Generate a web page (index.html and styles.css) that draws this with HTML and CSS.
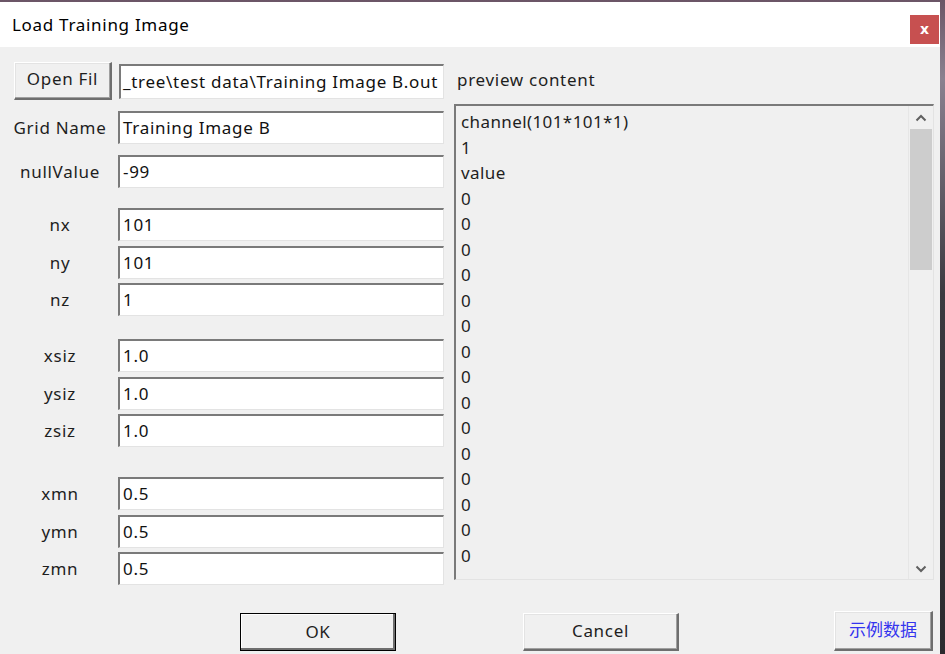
FILE: index.html
```html
<!DOCTYPE html>
<html lang="en">
<head>
<meta charset="utf-8">
<title>Load Training Image</title>
<link rel="stylesheet" href="styles.css">
</head>
<body>
<div class="window">
  <div class="titlebar">
    <span class="title">Load Training Image</span>
    <button class="close" type="button">x</button>
  </div>
  <div class="content">
    <div class="main">
      <div class="left">
        <div class="file-row">
          <button class="btn open" type="button">Open Fil</button>
          <div class="field path">_tree\test data\Training Image B.out</div>
        </div>
        <div class="group g1">
          <div class="row"><span class="label">Grid Name</span><div class="field">Training Image B</div></div>
          <div class="row"><span class="label">nullValue</span><div class="field">-99</div></div>
        </div>
        <div class="group g2">
          <div class="row"><span class="label">nx</span><div class="field">101</div></div>
          <div class="row"><span class="label">ny</span><div class="field">101</div></div>
          <div class="row"><span class="label">nz</span><div class="field">1</div></div>
        </div>
        <div class="group g3">
          <div class="row"><span class="label">xsiz</span><div class="field">1.0</div></div>
          <div class="row"><span class="label">ysiz</span><div class="field">1.0</div></div>
          <div class="row"><span class="label">zsiz</span><div class="field">1.0</div></div>
        </div>
        <div class="group g4">
          <div class="row"><span class="label">xmn</span><div class="field">0.5</div></div>
          <div class="row"><span class="label">ymn</span><div class="field">0.5</div></div>
          <div class="row"><span class="label">zmn</span><div class="field">0.5</div></div>
        </div>
      </div>
      <div class="right">
        <div class="preview-label">preview content</div>
        <div class="preview">
          <div class="preview-text">
            <div>channel(101*101*1)</div>
            <div>1</div>
            <div>value</div>
            <div>0</div><div>0</div><div>0</div><div>0</div><div>0</div>
            <div>0</div><div>0</div><div>0</div><div>0</div><div>0</div>
            <div>0</div><div>0</div><div>0</div><div>0</div><div>0</div>
          </div>
          <div class="scrollbar">
            <svg class="arrow" width="12" height="8" viewBox="0 0 12 8"><path d="M1.5 6.5 L6 2 L10.5 6.5" fill="none" stroke="#606060" stroke-width="2"/></svg>
            <div class="track"><div class="thumb"></div></div>
            <svg class="arrow" width="12" height="8" viewBox="0 0 12 8"><path d="M1.5 1.5 L6 6 L10.5 1.5" fill="none" stroke="#606060" stroke-width="2"/></svg>
          </div>
        </div>
      </div>
    </div>
    <div class="actions">
      <button class="btn ok" type="button">OK</button>
      <button class="btn cancel" type="button">Cancel</button>
      <button class="btn sample" type="button">示例数据</button>
    </div>
  </div>
</div>
</body>
</html>
```

FILE: styles.css
```css
* { box-sizing: border-box; }

html, body {
  margin: 0;
  height: 100%;
}

body {
  background: linear-gradient(to bottom, #6b5566 0%, #8a8190 12%, #3b3a40 45%, #2b2a2e 100%);
  padding-top: 2px;
  font-family: "Noto Sans", "Noto Sans CJK SC", sans-serif;
  font-size: 17px;
  letter-spacing: 0.7px;
  color: #1e1e1e;
  overflow: hidden;
}

.window {
  width: 940px;
  height: 652px;
  background: #f0f0f0;
  display: flex;
  flex-direction: column;
}

.titlebar {
  height: 45px;
  background: #ffffff;
  display: flex;
  align-items: center;
  justify-content: space-between;
  padding-left: 12px;
  padding-right: 1px;
}

.title {
  font-size: 17px;
  color: #000;
  margin-top: -1px;
}

.close {
  width: 29px;
  height: 29px;
  margin-top: 10px;
  border: none;
  background: #c75050;
  color: #fff;
  font-family: "DejaVu Sans", sans-serif;
  font-weight: bold;
  font-size: 14px;
  line-height: 29px;
  letter-spacing: 0;
  padding: 0;
}

.content {
  flex: 1;
  display: flex;
  flex-direction: column;
}

.main {
  display: flex;
}

.left {
  width: 444px;
}

.file-row {
  display: flex;
  align-items: flex-start;
  margin-top: 15px;
  padding-left: 14px;
}

.btn {
  font-family: "Noto Sans", "Noto Sans CJK SC", sans-serif;
  font-size: 17px;
  letter-spacing: 0.7px;
  color: #1e1e1e;
  background: #f0f0f0;
  border-top: 1px solid #ffffff;
  border-left: 1px solid #ffffff;
  border-right: 2px solid #6e6e6e;
  border-bottom: 2px solid #6e6e6e;
  box-shadow: inset -1px -1px 0 #a0a0a0, inset 1px 1px 0 #e3e3e3;
  padding: 0;
}

.open {
  width: 98px;
  height: 38px;
  padding-bottom: 4px;
}

.field {
  height: 33px;
  background: #fff;
  border-top: 2px solid #7a7a7a;
  border-left: 2px solid #7a7a7a;
  border-right: 1px solid #e3e3e3;
  border-bottom: 1px solid #e3e3e3;
  padding-left: 3px;
  line-height: 29px;
  white-space: nowrap;
  overflow: hidden;
  color: #111;
  flex: 1;
}

.path {
  margin-left: 7px;
  margin-top: 2px;
  height: 35px;
  line-height: 31px;
  padding-left: 2px;
}

.group {
  display: flex;
  flex-direction: column;
  gap: 4.5px;
}

.g1 { margin-top: 11px; gap: 11px; }
.g2 { margin-top: 20px; }
.g3 { margin-top: 23px; }
.g4 { margin-top: 30px; }

.row {
  display: flex;
  align-items: center;
}

.label {
  width: 118px;
  text-align: center;
  padding-left: 2px;
  white-space: nowrap;
}

.right {
  margin-left: 10px;
  width: 480px;
}

.preview-label {
  margin-top: 21px;
  padding-left: 3px;
  height: 36px;
  line-height: 24px;
}

.preview {
  height: 476px;
  border-top: 2px solid #7a7a7a;
  border-left: 2px solid #7a7a7a;
  border-right: 1px solid #e3e3e3;
  border-bottom: 1px solid #e3e3e3;
  display: flex;
  overflow: hidden;
}

.preview-text {
  flex: 1;
  padding-left: 5px;
  padding-top: 3px;
  line-height: 25.5px;
  letter-spacing: 0.4px;
}

.scrollbar {
  width: 25px;
  border-left: 1px solid #e6e6e6;
  display: flex;
  flex-direction: column;
  align-items: center;
}

.arrow {
  margin: 8px 0 6px;
}

.track {
  flex: 1;
  width: 100%;
  padding: 0 1px;
}

.thumb {
  height: 141px;
  margin-top: 1px;
  background: #cdcdcd;
}

.actions {
  display: flex;
  align-items: flex-end;
  margin-top: 26px;
}

.ok {
  margin-left: 240px;
  width: 156px;
  height: 38px;
  border: 1px solid #000;
  box-shadow: inset -2px -2px 0 #6e6e6e, inset 1px 1px 0 #ffffff;
  padding-bottom: 2px;
}

.cancel {
  margin-left: 127px;
  width: 156px;
  height: 38px;
  padding-bottom: 2px;
}

.sample {
  margin-left: 155px;
  width: 99px;
  height: 40px;
  color: #3434ee;
  letter-spacing: 0;
  padding-bottom: 4px;
}
```
